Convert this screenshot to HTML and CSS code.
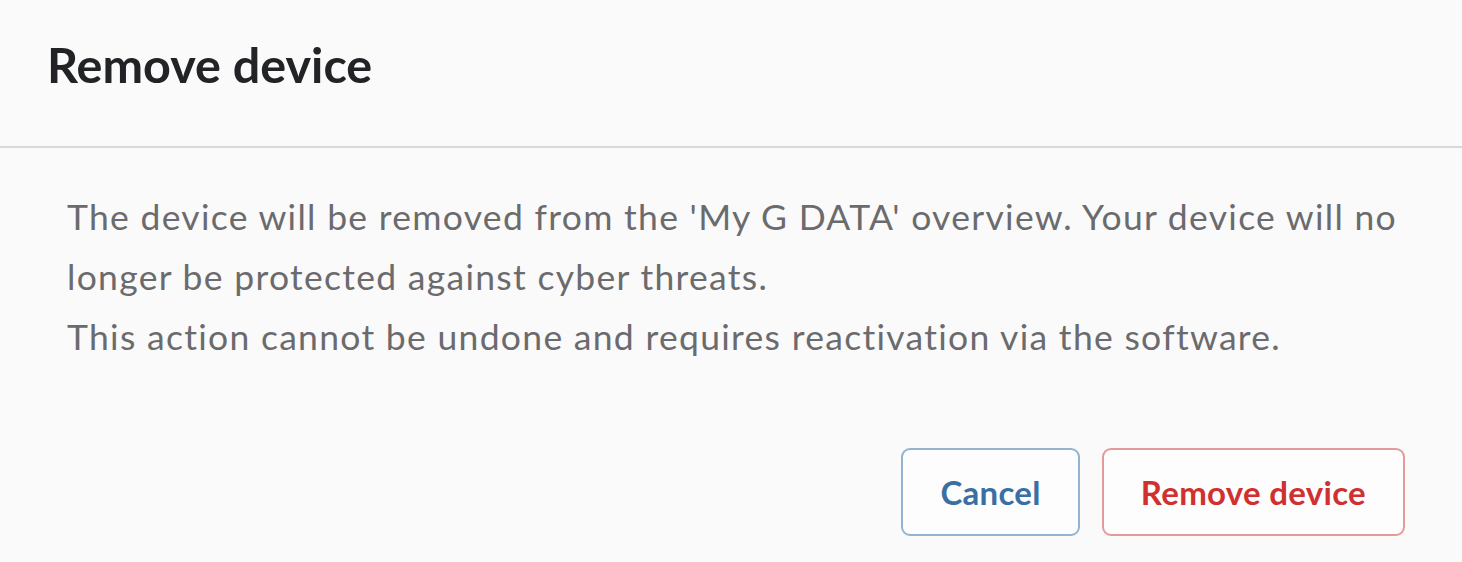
FILE: index.html
```html
<!DOCTYPE html>
<html lang="en">
<head>
<meta charset="utf-8">
<title>Remove device</title>
<link rel="stylesheet" href="styles.css">
</head>
<body>
<div class="dialog">
  <header class="dialog-header">
    <h1 class="dialog-title">Remove device</h1>
  </header>
  <section class="dialog-body">
    <p class="dialog-text">The device will be removed from the 'My G DATA' overview. Your device will no longer be protected against cyber threats.<br>This action cannot be undone and requires reactivation via the software.</p>
  </section>
  <footer class="dialog-footer">
    <button class="btn btn-cancel" type="button">Cancel</button>
    <button class="btn btn-danger" type="button">Remove device</button>
  </footer>
</div>
</body>
</html>
```
FILE: styles.css
```css
html, body {
  margin: 0;
  padding: 0;
  background: #fafafa;
}
.dialog {
  width: 1462px;
  font-family: "Lato", "Open Sans", sans-serif;
}
.dialog-header {
  height: 148px;
  box-sizing: border-box;
  border-bottom: 2px solid #d9d9d9;
  padding: 40px 0 0 47px;
}
.dialog-title {
  margin: 0;
  font-size: 48.5px;
  font-weight: 700;
  color: #222326;
  line-height: 1;
}
.dialog-body {
  padding: 39px 20px 0 67px;
}
.dialog-text {
  margin: 0;
  font-size: 35.5px;
  letter-spacing: 1.3px;
  line-height: 60px;
  color: #6b6b6e;
}
.dialog-footer {
  display: flex;
  justify-content: flex-end;
  gap: 22px;
  padding-right: 57px;
  margin-top: 81px;
}
.btn {
  height: 88px;
  box-sizing: border-box;
  padding: 0 37px;
  border-radius: 9px;
  background: #fdfdfd;
  font-family: inherit;
  font-size: 33px;
  letter-spacing: 0.3px;
  font-weight: 700;
  line-height: 1;
  cursor: pointer;
}
.btn-cancel {
  border: 2px solid #93b4d1;
  color: #3a6fa3;
}
.btn-danger {
  border: 2px solid #e49a9b;
  color: #d0302f;
}
```
